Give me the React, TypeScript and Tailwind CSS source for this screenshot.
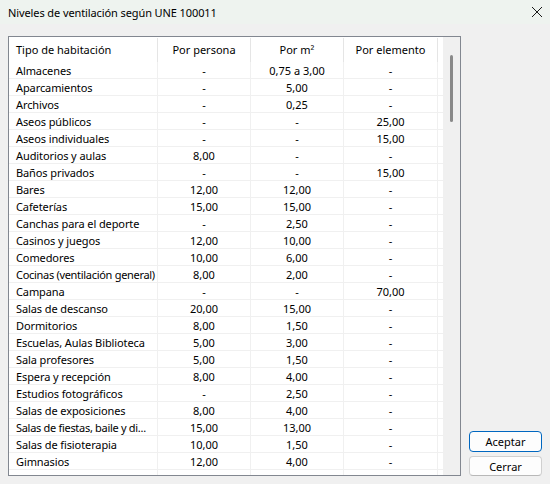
import React from "react";

const rows: [string, string, string, string][] = [
  ["Almacenes", "-", "0,75 a 3,00", "-"],
  ["Aparcamientos", "-", "5,00", "-"],
  ["Archivos", "-", "0,25", "-"],
  ["Aseos públicos", "-", "-", "25,00"],
  ["Aseos individuales", "-", "-", "15,00"],
  ["Auditorios y aulas", "8,00", "-", "-"],
  ["Baños privados", "-", "-", "15,00"],
  ["Bares", "12,00", "12,00", "-"],
  ["Cafeterías", "15,00", "15,00", "-"],
  ["Canchas para el deporte", "-", "2,50", "-"],
  ["Casinos y juegos", "12,00", "10,00", "-"],
  ["Comedores", "10,00", "6,00", "-"],
  ["Cocinas (ventilación general)", "8,00", "2,00", "-"],
  ["Campana", "-", "-", "70,00"],
  ["Salas de descanso", "20,00", "15,00", "-"],
  ["Dormitorios", "8,00", "1,50", "-"],
  ["Escuelas, Aulas Biblioteca", "5,00", "3,00", "-"],
  ["Sala profesores", "5,00", "1,50", "-"],
  ["Espera y recepción", "8,00", "4,00", "-"],
  ["Estudios fotográficos", "-", "2,50", "-"],
  ["Salas de exposiciones", "8,00", "4,00", "-"],
  ["Salas de fiestas, baile y di...", "15,00", "13,00", "-"],
  ["Salas de fisioterapia", "10,00", "1,50", "-"],
  ["Gimnasios", "12,00", "4,00", "-"],
  ["", "", "", ""],
];

export default function App() {
  return (
    <div
      className="w-[550px] h-[484px] flex flex-col bg-[#f0f0f0] text-[11px] text-black overflow-hidden"
      style={{ fontFamily: '"Noto Sans", "Open Sans", sans-serif' }}
    >
      <div className="h-[24px] bg-[#eef3ef] flex items-center justify-between pl-[8px] pr-[7px] shrink-0">
        <span className="leading-none text-[11px] tracking-[-0.1px]">Niveles de ventilación según UNE 100011</span>
        <svg width="12" height="12" viewBox="0 0 12 12">
          <path d="M1 1 L11 11 M11 1 L1 11" stroke="#1a1a1a" strokeWidth="1" />
        </svg>
      </div>
      <div className="flex pl-[8px] pt-[12px] gap-[8px]">
        <div className="w-[453px] h-[440px] border border-[#828790] flex bg-[#f0f0f0]">
          <div className="w-[434px] h-[438px] bg-white overflow-hidden flex flex-col">
            <div className="h-[25px] grid grid-cols-[149px_93px_93px_94px_5px] shrink-0 pt-[1px]">
              <div className="border-r border-[#e5e5e5] flex items-center pl-[7px]">Tipo de habitación</div>
              <div className="border-r border-[#e5e5e5] flex items-center justify-center">Por persona</div>
              <div className="border-r border-[#e5e5e5] flex items-center justify-center">Por m²</div>
              <div className="border-r border-[#e5e5e5] flex items-center justify-center">Por elemento</div>
              <div />
            </div>
            {rows.map((r, i) => (
              <div
                key={i}
                className="h-[17px] grid grid-cols-[149px_93px_93px_94px_5px] border-b border-[#f0f0f0] shrink-0 leading-[17px]"
              >
                <div
                  className={
                    r[0].length > 28
                      ? "border-r border-[#f0f0f0] pl-[7px] whitespace-nowrap overflow-hidden tracking-[-0.3px]"
                      : "border-r border-[#f0f0f0] pl-[7px] whitespace-nowrap overflow-hidden tracking-[-0.1px]"
                  }
                >
                  {r[0]}
                </div>
                <div className="border-r border-[#f0f0f0] text-center">{r[1]}</div>
                <div className="border-r border-[#f0f0f0] text-center">{r[2]}</div>
                <div className="border-r border-[#f0f0f0] text-center">{r[3]}</div>
                <div />
              </div>
            ))}
          </div>
          <div className="w-[17px] h-[438px] bg-[#f0f0f0] flex justify-center pt-[18px]">
            <div className="w-[3px] h-[67px] rounded-full bg-[#8a8a8a]" />
          </div>
        </div>
        <div className="flex flex-col justify-end gap-[4px] h-[440px]">
          <button className="w-[73px] h-[21px] rounded-[4px] border border-[#0067c0] bg-[#fdfdfd] flex items-center justify-center leading-none">
            Aceptar
          </button>
          <button className="w-[73px] h-[20px] rounded-[4px] border border-[#d0d0d0] border-b-[#b8b8b8] bg-[#fdfdfd] flex items-center justify-center leading-none">
            Cerrar
          </button>
        </div>
      </div>
    </div>
  );
}
